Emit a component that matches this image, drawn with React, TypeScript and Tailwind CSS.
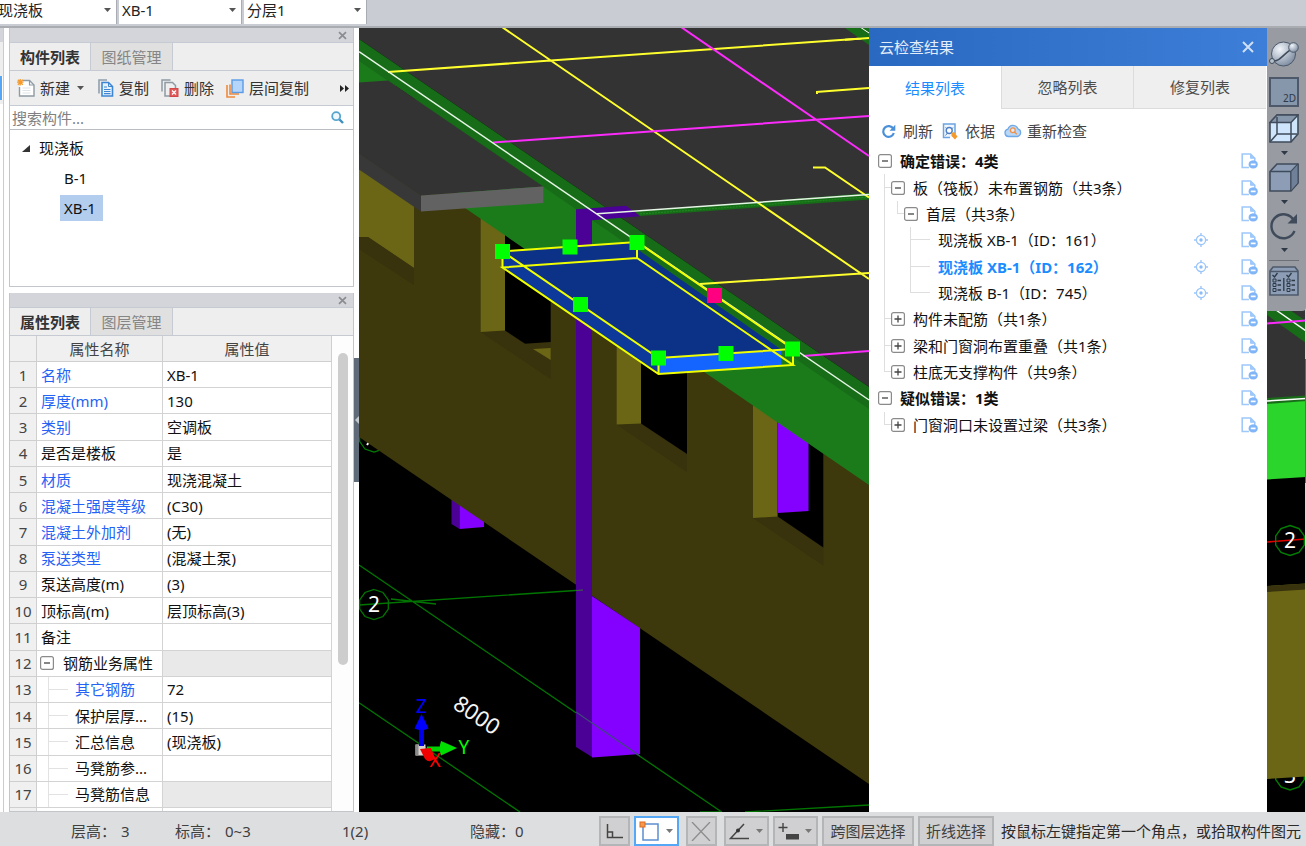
import type { ReactNode } from "react";

/* ---------- small icons ---------- */

function CloseX() {
  return (
    <svg width="9" height="9" viewBox="0 0 9 9" aria-hidden="true">
      <path d="M1 1.200 8 7.800M8 1.200 1 7.800" stroke="#8a8c90" strokeWidth="1.700" />
    </svg>
  );
}

function Caret({ color = "#555" }: { color?: string }) {
  return (
    <svg width="7" height="4" viewBox="0 0 7 4" aria-hidden="true">
      <path d="M0 0h7L3.500 4z" fill={color} />
    </svg>
  );
}

function NewIcon() {
  return (
    <svg width="18" height="18" viewBox="0 0 18 18" aria-hidden="true">
      <path d="M5.500 1.500h7l4.500 4.500v11H2.500v-9" fill="#fff" stroke="#8f9aa3" strokeWidth="1.400" />
      <path d="M12.500 1.500v4.500H17" fill="none" stroke="#8f9aa3" strokeWidth="1.200" />
      <path d="M5.500 9h8M5.500 11.500h8M5.500 14h8" stroke="#dfe3e6" />
      <path d="M3.200 0v6.500M0 3.200h6.500M.8.8l5 5M5.800.8l-5 5" stroke="#f79a2c" strokeWidth="1.300" />
    </svg>
  );
}

function CopyIcon() {
  return (
    <svg width="16" height="18" viewBox="0 0 16 18" aria-hidden="true">
      <path d="M1 14.500V1h8" fill="none" stroke="#8fa0ad" strokeWidth="1.600" />
      <path d="M4 3.500h6.500l4 4v9.500H4z" fill="#e8f2fd" stroke="#3f86d2" strokeWidth="1.600" />
      <path d="M10.500 3.500v4h4" fill="none" stroke="#3f86d2" />
      <path d="M6 8h3M6 10.500h6.500M6 12.500h6.500M6 14.700h6.500" stroke="#3f86d2" strokeWidth="1.200" />
    </svg>
  );
}

function DeleteIcon() {
  return (
    <svg width="18" height="18" viewBox="0 0 18 18" aria-hidden="true">
      <path d="M1 12.500V1h8.500M9 17H4V3.500h7.500l3 3V9" fill="none" stroke="#8f9aa3" strokeWidth="1.500" />
      <rect x="9" y="9.500" width="8" height="8" fill="#e25a5a" stroke="#d24848" />
      <path d="m11 11.500 4 4M15 11.500l-4 4" stroke="#fff" strokeWidth="1.300" />
    </svg>
  );
}

function FloorCopyIcon() {
  return (
    <svg width="18" height="19" viewBox="0 0 18 19" aria-hidden="true">
      <path d="M1 6v12h8M4 5.500V15h9" fill="none" stroke="#ee8a3c" strokeWidth="1.600" />
      <rect x="6" y="1" width="11" height="12.500" fill="#b5d5fb" stroke="#5b9be6" strokeWidth="1.400" />
    </svg>
  );
}

function SearchIcon() {
  return (
    <svg width="13" height="13" viewBox="0 0 13 13" aria-hidden="true">
      <circle cx="5.200" cy="5.200" r="4" fill="#eef8fd" stroke="#55a5cf" strokeWidth="1.800" />
      <path d="m8.500 8.500 3.500 3.500" stroke="#3d8fc0" strokeWidth="2.400" />
    </svg>
  );
}

function RefreshIcon() {
  return (
    <svg width="15" height="15" viewBox="0 0 15 15" aria-hidden="true">
      <path d="M12.300 4.800A5.400 5.400 0 1 0 12.800 9" fill="none" stroke="#4a90d9" strokeWidth="2.200" />
      <path d="M14.300.8v6H8.500z" fill="#4a90d9" />
    </svg>
  );
}

function BasisIcon() {
  return (
    <svg width="16" height="17" viewBox="0 0 16 17" aria-hidden="true">
      <path d="M8 14.500H1.500V1h11.500v10" fill="#f1f7fe" stroke="#6ba4e0" strokeWidth="1.500" />
      <circle cx="7.200" cy="7.500" r="3" fill="#fff" stroke="#4f7fc4" strokeWidth="1.400" />
      <path d="M3.500 12.500l2-2.500M11 4.500 9.500 6M3.500 4.500 5 6" stroke="#4f7fc4" fill="none" />
      <path d="m9.500 10 2.500-1 3.500 4.500-2.500 3-3.500-3.500z" fill="#f39a2b" />
    </svg>
  );
}

function CloudIcon() {
  return (
    <svg width="18" height="14" viewBox="0 0 18 14" aria-hidden="true">
      <path d="M4.500 12.500a3.700 3.700 0 0 1-.6-7.300 5.300 5.300 0 0 1 10-.4 4 4 0 0 1-.4 7.700z" fill="#b9d7f7" stroke="#6fa9e6" strokeWidth="1.300" />
      <circle cx="8.800" cy="6.300" r="2.400" fill="#dfeafa" stroke="#f0914a" strokeWidth="1.300" />
      <path d="m10.500 8 2.300 2.300" stroke="#f0914a" strokeWidth="1.400" />
    </svg>
  );
}

function TargetIcon() {
  return (
    <svg width="14" height="14" viewBox="0 0 14 14" aria-hidden="true">
      <circle cx="7" cy="7" r="4.600" fill="none" stroke="#9cc6fb" strokeWidth="1.300" />
      <circle cx="7" cy="7" r="1.700" fill="#8bbcfa" />
      <path d="M7 0v3M7 11v3M0 7h3M11 7h3" stroke="#9cc6fb" strokeWidth="1.400" />
    </svg>
  );
}

function IgnoreIcon() {
  return (
    <svg width="17" height="16" viewBox="0 0 17 16" aria-hidden="true">
      <path d="M8 14.500H1.200V1H9.500l4.300 4.300V8" fill="#fff" stroke="#9fc8fb" strokeWidth="1.600" />
      <path d="M9.500 1v4.300h4.300z" fill="#9fc8fb" stroke="#9fc8fb" />
      <path d="M12.200 7.200q4.600.6 4.600 4.200t-4.600 4.200q-4.600-.6-4.600-4.200t4.600-4.200z" fill="#80b5f8" />
      <path d="M9.800 11.400h4.800" stroke="#fff" strokeWidth="1.700" />
    </svg>
  );
}

/* ---------- docked panels ---------- */

function DockTitle() {
  return (
    <div className="flex h-[14px] shrink-0 items-center justify-end bg-[#d4d5da] pr-[6px]">
      <button type="button" aria-label="关闭"><CloseX /></button>
    </div>
  );
}

function DockTabs({ active, other }: { active: string; other: string }) {
  return (
    <div className="flex h-[29px] shrink-0 border-y border-[#c6cad2] bg-[#eeeeee]">
      <button type="button" className="w-[81px] border-r border-[#c6cad2] font-bold text-[#333]">{active}</button>
      <button type="button" className="w-[82px] border-r border-[#c6cad2] bg-[#e0e0e0] text-[#858585]">{other}</button>
    </div>
  );
}

function ToolButton({ icon, loose, children }: { icon: ReactNode; loose?: boolean; children: ReactNode }) {
  return (
    <button type="button" className={`flex items-center whitespace-nowrap ${loose ? "gap-[7px]" : "gap-[5px]"}`}>
      {icon}
      {children}
    </button>
  );
}

function ComponentPanel() {
  return (
    <section className="flex h-[259px] shrink-0 flex-col border border-t-0 border-[#c2c5ca] bg-white">
      <DockTitle />
      <DockTabs active="构件列表" other="图纸管理" />
      <div className="flex h-[35px] shrink-0 items-center border-b border-[#c6cad2] bg-[#eeeeee] pl-[7px] pr-1 text-[#333]">
        <div className="flex gap-[12px]">
          <ToolButton icon={<NewIcon />}>
            新建
            <span className="px-[2px]"><Caret /></span>
          </ToolButton>
          <ToolButton icon={<CopyIcon />}>复制</ToolButton>
          <ToolButton icon={<DeleteIcon />}>删除</ToolButton>
          <ToolButton icon={<FloorCopyIcon />}>层间复制</ToolButton>
        </div>
        <button type="button" aria-label="更多" className="ml-auto">
          <svg width="9" height="7" viewBox="0 0 9 7" aria-hidden="true">
            <path d="M0 0v7l4-3.500zM5 0v7l4-3.500z" fill="#222" />
          </svg>
        </button>
      </div>
      <label className="flex h-6 shrink-0 items-center border-b border-[#b9bcc1] pl-[2px] pr-[9px]">
        <input type="text" aria-label="搜索构件" placeholder="搜索构件..." className="min-w-0 flex-1 bg-transparent outline-none placeholder:text-[#808080]" />
        <SearchIcon />
      </label>
      <ul className="flex flex-col pt-[3px] text-[#111]">
        <li className="flex h-[30px] items-center gap-2 pl-3">
          <svg width="9" height="9" viewBox="0 0 9 9" aria-hidden="true"><path d="M8 1v7H0z" fill="#333" /></svg>
          现浇板
        </li>
        <li className="flex h-[30px] items-center pl-[50px]"><span className="px-1">B-1</span></li>
        <li className="flex h-[30px] items-center pl-[50px]"><span className="bg-[#b2cdee] pl-1 pr-[7px] leading-[26px]">XB-1</span></li>
      </ul>
    </section>
  );
}

type Prop = { name: string; value: string; blue?: boolean; child?: boolean; group?: boolean; gray?: boolean };

const properties: Prop[] = [
  { name: "名称", value: "XB-1", blue: true },
  { name: "厚度(mm)", value: "130", blue: true },
  { name: "类别", value: "空调板", blue: true },
  { name: "是否是楼板", value: "是" },
  { name: "材质", value: "现浇混凝土", blue: true },
  { name: "混凝土强度等级", value: "(C30)", blue: true },
  { name: "混凝土外加剂", value: "(无)", blue: true },
  { name: "泵送类型", value: "(混凝土泵)", blue: true },
  { name: "泵送高度(m)", value: "(3)" },
  { name: "顶标高(m)", value: "层顶标高(3)" },
  { name: "备注", value: "" },
  { name: "钢筋业务属性", value: "", group: true, gray: true },
  { name: "其它钢筋", value: "72", blue: true, child: true },
  { name: "保护层厚...", value: "(15)", child: true },
  { name: "汇总信息", value: "(现浇板)", child: true },
  { name: "马凳筋参...", value: "", child: true },
  { name: "马凳筋信息", value: "", child: true, gray: true },
];

function TreeBox({ open }: { open: boolean }) {
  return (
    <svg width="14" height="14" viewBox="0 0 14 14" className="shrink-0" aria-hidden="true">
      <rect x=".6" y=".6" width="12.800" height="12.800" rx="2" fill="#fff" stroke="#8a8a8a" strokeWidth="1.200" />
      <path d={open ? "M4 7h6" : "M3.500 7h7M7 3.500v7"} stroke="#444" strokeWidth="1.300" />
    </svg>
  );
}

function PropertyPanel() {
  return (
    <section className="flex min-h-0 flex-1 flex-col border border-t-0 border-[#c2c5ca] bg-white">
      <DockTitle />
      <DockTabs active="属性列表" other="图层管理" />
      <div className="flex min-h-0 flex-1 overflow-hidden">
        <div className="flex min-w-0 flex-1 flex-col">
          <table className="h-[472px] w-full shrink-0 table-fixed border-separate border-spacing-0">
            <colgroup>
              <col className="w-[27px]" />
              <col className="w-[126px]" />
              <col />
            </colgroup>
            <thead>
              <tr className="h-[26px] bg-[#f0f0f0] text-[#444]">
                <th aria-label="序号" className="border-b border-r border-[#cfcfcf]" />
                <th className="border-b border-r border-[#cfcfcf] font-normal">属性名称</th>
                <th className="border-b border-r border-[#cfcfcf] font-normal">属性值</th>
              </tr>
            </thead>
            <tbody>
              {properties.map((p, i) => (
                <tr key={i}>
                  <td className="border-b border-r border-[#cfcfcf] bg-[#f0f0f0] p-0 text-center text-[#444]">{i + 1}</td>
                  <td className={`h-px border-b border-r border-[#d3d3d3] p-0 ${p.blue ? "text-[#2563f5]" : "text-[#111]"}`}>
                    <div className="flex h-full items-center whitespace-nowrap">
                      {p.group && <span className="ml-[3px] mr-[9px] flex"><TreeBox open /></span>}
                      {p.child && (
                        <span className="ml-[11px] mr-[7px] flex w-[20px] items-center self-stretch border-l border-[#e2e2e2]">
                          <span className="w-full border-t border-[#e2e2e2]" />
                        </span>
                      )}
                      <span className={p.group || p.child ? "" : "pl-1"}>{p.name}</span>
                    </div>
                  </td>
                  <td className={`whitespace-nowrap border-b border-r border-[#d3d3d3] p-0 pl-1 text-[#111] ${p.gray ? "bg-[#e9e9e9]" : ""}`}>{p.value}</td>
                </tr>
              ))}
            </tbody>
          </table>
          <div className="flex min-h-0 flex-1">
            <span className="w-[27px] border-r border-[#cfcfcf] bg-[#f0f0f0]" />
            <span className="w-[126px] border-r border-[#d3d3d3]" />
            <span className="flex-1 border-r border-[#d3d3d3]" />
          </div>
        </div>
        <div className="flex w-[21px] shrink-0 justify-center bg-[#fdfdfd] pt-[17px]">
          <div className="h-[312px] w-[10px] rounded-full bg-[#cdcdcd]" />
        </div>
      </div>
    </section>
  );
}

/* ---------- model view ---------- */

const BUBBLE = "M0-15 9-12 14.300-4.600 14.300 4.600 9 12 0 15-9 12-14.300 4.600-14.300-4.600-9-12z";

function Scene() {
  return (
    <svg viewBox="359 28 947 784" preserveAspectRatio="xMinYMin slice" className="absolute inset-0 h-full w-full" fontFamily="'Noto Sans', sans-serif" role="img" aria-label="三维模型">
      <rect x="359" y="28" width="947" height="784" fill="#000" />

      {/* axis bubble hidden partly behind the wall */}
      <path d={BUBBLE} transform="translate(374 437)" fill="none" stroke="#008000" strokeWidth="1.200" />
      <path d="m367 445 2-3" stroke="#fff" strokeWidth="2" />

      {/* short column behind wall */}
      <path d="M451.500 495v29l8 5V495z" fill="#4b0096" />
      <path d="M459.500 495v34l24.500-2v-32z" fill="#8400ff" />

      {/* wall */}
      <path d="M359 140V437L869 784V440L500 190z" fill="#3d390c" />
      <path d="M359 165 414 205v63l-46-31h-9z" fill="#6a6615" />
      <path d="M359 237h9l46 31v17l-55-36z" fill="#38320d" />

      {/* openings */}
      <path d="m480.700 332 24.300-2 20 14 25.700-2v37z" fill="#38320d" />
      <path d="M480.700 210h24.300v120.500l-24.300 1.500z" fill="#6a6615" />
      <path d="M505 210h45.700v132l-25.700 1.700-20-13.200z" fill="#000" />
      <path d="m533 349 17.700-1v12z" fill="#6a6615" />
      <path d="m616.700 424.500 24.300-1 46 30.500v18z" fill="#38320d" />
      <path d="M616.700 330h24.300v93.500l-24.300 1z" fill="#6a6615" />
      <path d="M641 340h46v114l-46-30.500z" fill="#000" />
      <path d="m753 518 24.700-1.500 45.600 31v18z" fill="#38320d" />
      <path d="M753 390h24.700v126.500l-24.700 1.500z" fill="#6a6615" />
      <path d="M777.700 400h45.600v147.500l-45.600-31z" fill="#000" />
      <path d="M777.700 400h30.800v111l-30.800 2z" fill="#8400ff" />

      {/* floor slab, beam */}
      <path d="M359 28h510v359L359 39z" fill="#333" />
      <path d="M359 60v26h50l56 122 404 277v-77z" fill="#1b7b1b" />
      <path d="M359 39 869 387v22L359 61z" fill="#176c17" />
      <path d="M635 211.500 869 193v6.500L640 216z" fill="#176c17" />
      <path d="M640 214 869 197" stroke="#1f8a1f" strokeDasharray="2 1" />

      {/* balcony */}
      <path d="m359 82.500 29-2 155.300 106-122.300 9L359 153.500z" fill="#333" />
      <path d="m359 153.500 62 42v16l-62-42z" fill="#383838" />
      <path d="m421 195.500 122.300-9V203L421 211.500z" fill="#626262" />

      {/* grid lines */}
      <g stroke="#007600" strokeWidth="1.300" fill="none">
        <path d="M359 565 721.700 812M359 702.700 520 812M359 605l224-15M391 599l45 5M745 812l124-7M700 812h20" />
        <path d={BUBBLE} transform="translate(374 604.500)" />
      </g>

      {/* main column */}
      <path d="m576 209.300 50-3.600 14 10.500-48 4V757l-16-10z" fill="#4b0096" />
      <path d="m592 596 48 32v126l-48 3.500z" fill="#8400ff" />
      <path d="m576 712 16 11 48 33" stroke="#3d4a78" strokeWidth="1.200" fill="none" />
      <path d="m576 590.500 7-.5" stroke="#3d6a3d" />

      {/* slab reinforcement lines */}
      <g stroke="#ffff2e" strokeWidth="2" fill="none">
        <path d="M388 72 869 38M502 27 869 279M700 284 869 273M816 92 869 88M817 91v3M813 167.500h12L869 197.500" />
      </g>
      <g stroke="#fb2cfb" strokeWidth="2">
        <path d="M493 142.500 869 116M681 27 869 156M803 356 869 351" />
      </g>
      <path d="M845 28h24v17z" fill="#176c17" />
      <path d="M845 39.700 869 38" stroke="#ffff2e" strokeWidth="2" />
      <path d="m860 27 9 6" stroke="#fff" />
      <path d="M359 51.500 869 400" stroke="#e6f5e6" strokeWidth="1.500" />
      <path d="M597 213.700 869 194.500" stroke="#e6f5e6" strokeWidth="1.500" />

      {/* selected slab */}
      <path d="M502.500 251.500 637 242v7l145 101-123.500 8z" fill="#0b3287" />
      <path d="m502.500 251.500 156 106.500v16l-156-106.500z" fill="#0d3a9a" />
      <path d="m658.500 358 122.500-8v15.500l-122.500 8.500z" fill="#1464ff" />
      <g fill="none" stroke="#efff00" strokeWidth="2">
        <path d="M502.500 251.500 637 242 793 349 658.500 358zM502.500 267.500 637 258 793 365 658.500 374zM502.500 251v17M637 242v16M793 349v16M658.500 358v16" />
      </g>
      <g fill="#00ff00">
        <rect x="495" y="244" width="15" height="15" />
        <rect x="562.500" y="239.500" width="15" height="15" />
        <rect x="629.500" y="235" width="15" height="15" />
        <rect x="573" y="297" width="15" height="15" />
        <rect x="651" y="350.500" width="15" height="15" />
        <rect x="718.500" y="346" width="15" height="15" />
        <rect x="785" y="341.500" width="15" height="15" />
      </g>
      <rect x="707" y="288" width="15" height="15" fill="#ff0080" />

      {/* annotations */}
      <text x="374" y="612" fontSize="21" fill="#fff" textAnchor="middle">2</text>
      <text x="477" y="723" fontSize="22" fill="#f4f4f4" textAnchor="middle" transform="rotate(34 477 715)">8000</text>

      {/* coordinate axes */}
      <rect x="415.500" y="744.500" width="10" height="11" fill="#d9d2cf" />
      <path d="M415.500 744.500h3v11h-3z" fill="#8b8b8b" />
      <path d="M419 728h5v18h-5z" fill="#0000e8" />
      <path d="m421.500 714 7 14.500q-7 3-14 0z" fill="#0000ff" />
      <path d="M427 746.500h15v5h-15z" fill="#00d000" />
      <path d="m457 748-16 7.500q-2.500-7 0-14.500z" fill="#00e000" />
      <path d="m420 749 11-1 4 10q-5 6-10 1z" fill="#f00000" />
      <text x="421.500" y="713" fontSize="19" fill="#0000ff" textAnchor="middle">Z</text>
      <text x="464" y="754" fontSize="19" fill="#00ff00" textAnchor="middle">Y</text>
      <text x="435" y="767" fontSize="19" fill="#ff0000" textAnchor="middle">X</text>

      {/* far side of the model */}
      <path d="M1267 300h39v101l-39 3z" fill="#333" />
      <path d="M1267 300h8l31 21v22l-39-28z" fill="#176c17" />
      <path d="m1276 310 30 21" stroke="#fff" strokeWidth="1.500" />
      <path d="m1267 323.500 39-3" stroke="#fb2cfb" strokeWidth="2" />
      <path d="m1267 398 39-2.500v6l-39 3z" fill="#176c17" />
      <path d="m1267 401 39-2.500" stroke="#fff" strokeWidth="1.500" />
      <path d="m1267 404 39-3v76l-39 2.500z" fill="#2bd52b" />
      <path d="m1267 542 39-3" stroke="#e00000" strokeWidth="1.600" />
      <path d={BUBBLE} transform="translate(1290 540.500)" fill="none" stroke="#008000" strokeWidth="1.400" />
      <text x="1290" y="548" fontSize="21" fill="#fff" textAnchor="middle">2</text>
      <path d={BUBBLE} transform="translate(1290 775)" fill="none" stroke="#008000" strokeWidth="1.400" />
      <text x="1290" y="783" fontSize="21" fill="#fff" textAnchor="middle">3</text>
      <path d="m1267 586 39-2.500v193l-39 2.500z" fill="#6a6615" />
      <path d="m1267 586 39-2.500v6l-39 2.500z" fill="#38320d" />
      <path d="M1305.500 28v784" stroke="#d5d8dc" />
      <path d="M1305.500 359v124" stroke="#5f6b78" />
    </svg>
  );
}

/* ---------- check results ---------- */

type Guide = "line" | "tee" | "end" | "blank";
type Row = { text: string; guides: Guide[]; box?: "open" | "closed"; bold?: boolean; active?: boolean; leaf?: boolean };

const rows: Row[] = [
  { text: "确定错误：4类", guides: [], box: "open", bold: true },
  { text: "板（筏板）未布置钢筋（共3条）", guides: ["tee"], box: "open" },
  { text: "首层（共3条）", guides: ["line", "end"], box: "open" },
  { text: "现浇板 XB-1（ID：161）", guides: ["line", "blank", "tee"], leaf: true },
  { text: "现浇板 XB-1（ID：162）", guides: ["line", "blank", "tee"], leaf: true, bold: true, active: true },
  { text: "现浇板 B-1（ID：745）", guides: ["line", "blank", "end"], leaf: true },
  { text: "构件未配筋（共1条）", guides: ["tee"], box: "closed" },
  { text: "梁和门窗洞布置重叠（共1条）", guides: ["tee"], box: "closed" },
  { text: "柱底无支撑构件（共9条）", guides: ["end"], box: "closed" },
  { text: "疑似错误：1类", guides: [], box: "open", bold: true },
  { text: "门窗洞口未设置过梁（共3条）", guides: ["end"], box: "closed" },
];

function GuideCell({ kind, long }: { kind: Guide; long: boolean }) {
  return (
    <span className={`grid shrink-0 grid-rows-2 self-stretch pl-[6px] ${long ? "w-[26px]" : "w-[13px]"}`}>
      <span className={`border-[#dedede] ${kind === "blank" ? "" : "border-l"} ${kind === "tee" || kind === "end" ? "border-b" : ""}`} />
      <span className={`border-[#dedede] ${kind === "line" || kind === "tee" ? "border-l" : ""}`} />
    </span>
  );
}

function ResultPanel() {
  return (
    <aside className="flex w-[398px] shrink-0 flex-col bg-white">
      <header className="flex h-[38px] shrink-0 items-center justify-between bg-gradient-to-r from-[#2a69c1] to-[#3d7ed8] px-[10px] text-[#e4eefa]">
        <h2>云检查结果</h2>
        <button type="button" aria-label="关闭" className="mr-[3px]">
          <svg width="12" height="12" viewBox="0 0 12 12" aria-hidden="true">
            <path d="m1 1 10 10M11 1 1 11" stroke="#cfe0f6" strokeWidth="2" />
          </svg>
        </button>
      </header>
      <div className="grid h-[43px] shrink-0 grid-cols-[132px_132px_1fr] pr-px text-[#4d4d4d]">
        <button type="button" className="bg-white text-[#1a8cff]">结果列表</button>
        <button type="button" className="border-b border-l border-[#dcdcdc] bg-[#efefef]">忽略列表</button>
        <button type="button" className="border-b border-l border-[#dcdcdc] bg-[#efefef]">修复列表</button>
      </div>
      <div className="flex h-[39px] shrink-0 items-end gap-[9px] px-3 pb-[7px] text-[#444]">
        <ToolButton loose icon={<RefreshIcon />}>刷新</ToolButton>
        <ToolButton loose icon={<BasisIcon />}>依据</ToolButton>
        <ToolButton icon={<CloudIcon />}>重新检查</ToolButton>
      </div>
      <ul className="grid h-[290px] shrink-0 auto-rows-fr">
        {rows.map((r) => (
          <li key={r.text} className={`flex items-center pl-[9px] pr-[9px] ${r.active ? "text-[#1a8cff]" : "text-[#111]"} ${r.bold ? "font-bold" : ""}`}>
            {r.guides.map((g, i) => (
              <GuideCell key={i} kind={g} long={i === 2} />
            ))}
            {r.box && <TreeBox open={r.box === "open"} />}
            <span className="whitespace-nowrap pl-2">{r.text}</span>
            <span className="ml-auto flex items-center gap-[33px]">
              {r.leaf && <button type="button" aria-label="定位"><TargetIcon /></button>}
              <button type="button" aria-label="忽略"><IgnoreIcon /></button>
            </span>
          </li>
        ))}
      </ul>
    </aside>
  );
}

function ViewBar() {
  return (
    <nav className="flex h-[283px] w-[39px] shrink-0 flex-col items-center rounded-br-sm bg-[#989ba1] pr-[5px] pt-[12px]">
      <button type="button" aria-label="动态观察">
        <svg width="30" height="28" viewBox="0 0 30 28" aria-hidden="true">
          <defs>
            <radialGradient id="ball" cx=".35" cy=".3" r=".8">
              <stop offset="0" stopColor="#f2f6fb" />
              <stop offset="1" stopColor="#74849a" />
            </radialGradient>
          </defs>
          <circle cx="14.500" cy="14" r="12" fill="url(#ball)" stroke="#4b5869" />
          <path d="M3 21c9 1 12-9 22-13" fill="none" stroke="#3f4b5b" strokeWidth="1.600" />
          <circle cx="24.500" cy="7.500" r="4.800" fill="url(#ball)" stroke="#4b5869" />
          <circle cx="3" cy="21" r="2.500" fill="#b4bfcc" stroke="#3f4b5b" />
        </svg>
      </button>
      <button type="button" className="mt-[9px] flex h-[30px] w-[30px] items-end justify-end border-2 border-[#4d596b] bg-[#8696ab] pr-[1px] text-[10px] leading-[14px] text-[#2e3947]">2D</button>
      <button type="button" aria-label="线框" className="mt-[7px]">
        <svg width="30" height="29" viewBox="0 0 30 29" aria-hidden="true">
          <path d="M1 8.500 8 1h21v19l-7 8H1z" fill="#cfe5fb" stroke="#3f4b5b" strokeWidth="1.600" />
          <path d="M1 8.500 8 1h21l-7 7.500z" fill="#8696ab" stroke="#3f4b5b" strokeWidth="1.300" />
          <path d="M22 8.500V28M8 3v17h20M8 20l-7 8M22 20v8" fill="none" stroke="#3f4b5b" strokeWidth="1.500" />
        </svg>
      </button>
      <span className="mt-[8px]"><Caret color="#2e3947" /></span>
      <button type="button" aria-label="实体" className="mt-[8px]">
        <svg width="30" height="29" viewBox="0 0 30 29" aria-hidden="true">
          <path d="M1 8.500 8 1h21v19l-7 8H1z" fill="#8c9db5" stroke="#3f4b5b" strokeWidth="1.600" />
          <path d="M1 8.500h21L29 1M22 8.500V28" fill="none" stroke="#3f4b5b" strokeWidth="1.500" />
          <path d="m22 8.500 7-7.500v19l-7 8z" fill="#6f8098" stroke="#3f4b5b" />
        </svg>
      </button>
      <span className="mt-[8px]"><Caret color="#2e3947" /></span>
      <button type="button" aria-label="旋转" className="mt-[8px]">
        <svg width="30" height="29" viewBox="0 0 30 29" aria-hidden="true">
          <path d="M25 8.500A12 12 0 1 0 25.500 19" fill="none" stroke="#3f4b5b" strokeWidth="2.400" />
          <path d="M28 2v9.500h-9.500z" fill="#3f4b5b" />
        </svg>
      </button>
      <span className="mt-[7px]"><Caret color="#2e3947" /></span>
      <span className="mt-[8px] w-[30px] border-t border-[#6b7079]" />
      <button type="button" aria-label="显示设置" className="mt-[5px]">
        <svg width="30" height="30" viewBox="0 0 30 30" aria-hidden="true">
          <path d="M1 5 4 1h22l3 4v24H1z" fill="#8c9db5" stroke="#4d596b" strokeWidth="1.600" />
          <path d="M1 5.500h28" stroke="#4d596b" strokeWidth="1.500" />
          <path d="M14.800 12v13M3.500 9l2 2 3-4M17.500 9l2 2 3-4M8.500 14.500H12M8.500 19H12M8.500 24H12M22.500 14.500H26M22.500 19H26M22.500 24H26" fill="none" stroke="#2e3947" strokeWidth="1.300" />
          <path d="M4 13h3v3H4zM4 17.500h3v3H4zM4 22.500h3v3H4zM18 13h3v3h-3zM18 17.500h3v3h-3zM18 22.500h3v3h-3z" fill="none" stroke="#2e3947" />
        </svg>
      </button>
    </nav>
  );
}

/* ---------- status bar ---------- */

function SnapButton({ label, active, wide, children }: { label: string; active?: boolean; wide?: boolean; children: ReactNode }) {
  return (
    <button
      type="button"
      aria-label={label}
      className={`flex items-center border-2 ${wide ? "w-[45px] justify-between pl-[3px] pr-[4px]" : "w-[31px] justify-center"} ${active ? "border-[#55a8f5] bg-white" : "border-[#b4b5b7] bg-[#d0d0d2]"}`}
    >
      {children}
      {wide && <Caret color="#777" />}
    </button>
  );
}

function StatusBar() {
  return (
    <footer className="flex h-[34px] shrink-0 items-stretch overflow-hidden bg-[#dddee0] text-[#404040]">
      <div className="flex flex-1 items-center whitespace-nowrap pl-[71px] pt-1">
        <span className="flex w-[104px] gap-[5px]"><span>层高：</span><span>3</span></span>
        <span className="flex w-[167px] gap-[5px]"><span>标高：</span><span>0~3</span></span>
        <span className="w-[128px]">1(2)</span>
        <span>隐藏：0</span>
      </div>
      <div className="flex shrink-0 items-stretch gap-[4px] pt-[4px]">
        <SnapButton label="正交">
          <svg width="17" height="15" viewBox="0 0 17 15" aria-hidden="true"><path d="M1.500 0v13.500H17M1.500 8h5v5.500" fill="none" stroke="#444" strokeWidth="1.500" /></svg>
        </SnapButton>
        <SnapButton label="矩形选择" active wide>
          <svg width="21" height="20" viewBox="0 0 21 20" aria-hidden="true">
            <rect x="4" y="3" width="15" height="16" fill="#fff" stroke="#5b8fd0" strokeWidth="1.500" />
            <rect x="1" y="1" width="5" height="5" fill="#f39a4c" stroke="#e06a20" />
          </svg>
        </SnapButton>
        <span className="ml-[3px] flex">
          <SnapButton label="交点">
            <svg width="20" height="19" viewBox="0 0 20 19" aria-hidden="true"><path d="m1 0 18 19M19 0 1 19" stroke="#8c8c8c" strokeWidth="1.300" /></svg>
          </SnapButton>
        </span>
        <span className="ml-[3px] flex">
          <SnapButton label="角度" wide>
            <svg width="20" height="17" viewBox="0 0 20 17" aria-hidden="true">
              <path d="M15 1 1.500 15.500H20" fill="none" stroke="#444" strokeWidth="1.500" />
              <circle cx="9" cy="7.500" r="2" fill="#333" />
            </svg>
          </SnapButton>
        </span>
        <SnapButton label="动态输入" wide>
          <svg width="22" height="17" viewBox="0 0 22 17" aria-hidden="true">
            <path d="M5 0v9M.5 4.500h9" stroke="#444" strokeWidth="1.400" />
            <rect x="8" y="11" width="13" height="5.500" fill="#444" />
          </svg>
        </SnapButton>
        <button type="button" className="w-[92px] whitespace-nowrap border-2 border-[#b4b5b7] bg-[#d0d0d2]">跨图层选择</button>
        <button type="button" className="w-[76px] whitespace-nowrap border-2 border-[#b4b5b7] bg-[#d0d0d2]">折线选择</button>
        <span className="self-center whitespace-nowrap pl-[3px] pr-[5px] text-[#2b2b2b]">按鼠标左键指定第一个角点，或拾取构件图元</span>
      </div>
    </footer>
  );
}

/* ---------- page ---------- */

function TopSelect({ label, value, first }: { label: string; value: string; first?: boolean }) {
  return (
    <div className={`flex h-6 items-center border-r border-[#a9adb3] bg-white pb-[4px] pr-[5px] ${first ? "w-[117px]" : "w-[123px]"}`}>
      <select aria-label={label} className={`min-w-0 flex-1 appearance-none bg-transparent leading-[20px] text-[#222] outline-none ${first ? "-ml-[2px]" : "pl-[3px]"}`}>
        <option>{value}</option>
      </select>
      <Caret />
    </div>
  );
}

export default function App() {
  return (
    <div className="flex h-screen flex-col overflow-hidden bg-white font-['Noto_Sans','Noto_Sans_CJK_SC',sans-serif] text-[15px] leading-[20px]">
      <div className="flex h-7 shrink-0 items-start gap-[2px] border-b-2 border-[#a9adb2] bg-[#c9cdd3]">
        <TopSelect label="构件类型" value="现浇板" first />
        <TopSelect label="构件" value="XB-1" />
        <TopSelect label="分层" value="分层1" />
      </div>
      <main className="flex min-h-0 flex-1">
        <div className="flex w-[4px] shrink-0 flex-col border-r border-[#c9cbd0]">
          <span className="h-[14px] bg-[#d4d5da]" />
          <span className="h-[34px] bg-[#eee]" />
          <span className="h-6 w-[2px] bg-[#56a6f5]" />
          <span className="h-1 bg-[#eee]" />
        </div>
        <div className="ml-[5px] flex w-[345px] shrink-0 flex-col gap-[6px]">
          <ComponentPanel />
          <PropertyPanel />
        </div>
        <div className="flex w-[5px] shrink-0 flex-col justify-center">
          <button type="button" aria-label="收起面板" className="flex h-[124px] items-center justify-end bg-[#5f6b78]">
            <svg width="4" height="8" viewBox="0 0 4 8" aria-hidden="true"><path d="M4 0v8L0 4z" fill="#c5cad0" /></svg>
          </button>
        </div>
        <div className="relative min-w-0 flex-1 overflow-hidden bg-black">
          <Scene />
          <div className="relative flex h-full items-stretch justify-end">
            <ResultPanel />
            <ViewBar />
          </div>
        </div>
      </main>
      <StatusBar />
    </div>
  );
}
